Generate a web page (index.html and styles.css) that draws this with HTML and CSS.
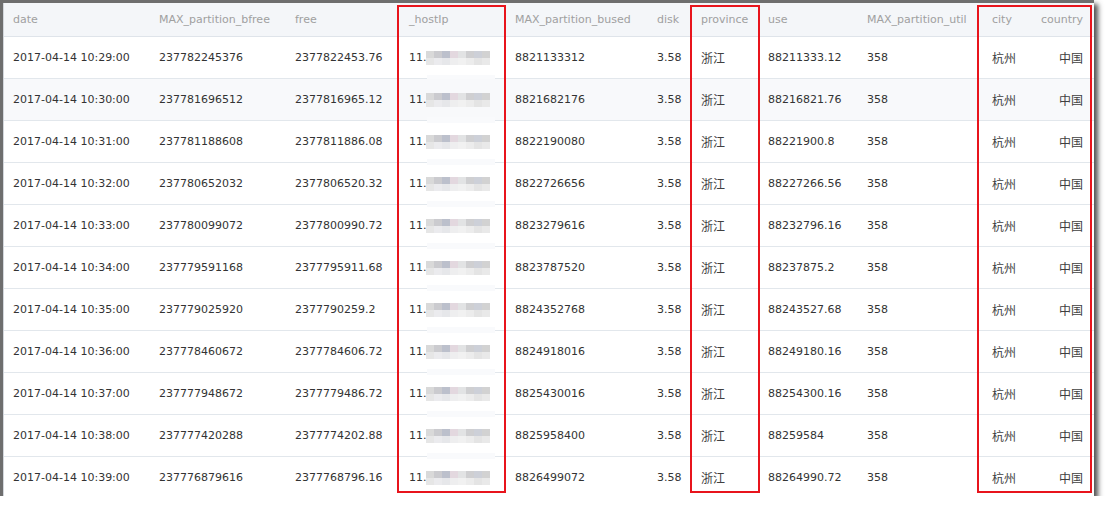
FILE: index.html
```html
<!DOCTYPE html>
<html lang="zh">
<head>
<meta charset="utf-8">
<title>table</title>
<link rel="stylesheet" href="styles.css">
</head>
<body>
<div class="frame">
  <div class="inner">
    <table class="grid">
      <colgroup>
        <col class="w1"><col class="w2"><col class="w3"><col class="w4"><col class="w5"><col class="w6"><col class="w7"><col class="w8"><col class="w9"><col class="w10"><col class="w11">
      </colgroup>
      <thead>
        <tr>
          <th class="first">date</th><th>MAX_partition_bfree</th><th>free</th><th>_hostIp</th><th>MAX_partition_bused</th><th>disk</th><th>province</th><th>use</th><th>MAX_partition_util</th><th>city</th><th class="right">country</th>
        </tr>
      </thead>
      <tbody>
        <tr><td class="first">2017-04-14 10:29:00</td><td>237782245376</td><td>2377822453.76</td><td><span class="ip">11.</span><span class="blur"></span><span class="patch"></span></td><td>8821133312</td><td>3.58</td><td><span class="cjk">浙江</span></td><td>88211333.12</td><td>358</td><td><span class="cjk">杭州</span></td><td class="right"><span class="cjk">中国</span></td></tr>
        <tr class="alt"><td class="first">2017-04-14 10:30:00</td><td>237781696512</td><td>2377816965.12</td><td><span class="ip">11.</span><span class="blur"></span><span class="patch"></span></td><td>8821682176</td><td>3.58</td><td><span class="cjk">浙江</span></td><td>88216821.76</td><td>358</td><td><span class="cjk">杭州</span></td><td class="right"><span class="cjk">中国</span></td></tr>
        <tr><td class="first">2017-04-14 10:31:00</td><td>237781188608</td><td>2377811886.08</td><td><span class="ip">11.</span><span class="blur"></span><span class="patch"></span></td><td>8822190080</td><td>3.58</td><td><span class="cjk">浙江</span></td><td>88221900.8</td><td>358</td><td><span class="cjk">杭州</span></td><td class="right"><span class="cjk">中国</span></td></tr>
        <tr><td class="first">2017-04-14 10:32:00</td><td>237780652032</td><td>2377806520.32</td><td><span class="ip">11.</span><span class="blur"></span><span class="patch"></span></td><td>8822726656</td><td>3.58</td><td><span class="cjk">浙江</span></td><td>88227266.56</td><td>358</td><td><span class="cjk">杭州</span></td><td class="right"><span class="cjk">中国</span></td></tr>
        <tr><td class="first">2017-04-14 10:33:00</td><td>237780099072</td><td>2377800990.72</td><td><span class="ip">11.</span><span class="blur"></span><span class="patch"></span></td><td>8823279616</td><td>3.58</td><td><span class="cjk">浙江</span></td><td>88232796.16</td><td>358</td><td><span class="cjk">杭州</span></td><td class="right"><span class="cjk">中国</span></td></tr>
        <tr><td class="first">2017-04-14 10:34:00</td><td>237779591168</td><td>2377795911.68</td><td><span class="ip">11.</span><span class="blur"></span><span class="patch"></span></td><td>8823787520</td><td>3.58</td><td><span class="cjk">浙江</span></td><td>88237875.2</td><td>358</td><td><span class="cjk">杭州</span></td><td class="right"><span class="cjk">中国</span></td></tr>
        <tr><td class="first">2017-04-14 10:35:00</td><td>237779025920</td><td>2377790259.2</td><td><span class="ip">11.</span><span class="blur"></span><span class="patch"></span></td><td>8824352768</td><td>3.58</td><td><span class="cjk">浙江</span></td><td>88243527.68</td><td>358</td><td><span class="cjk">杭州</span></td><td class="right"><span class="cjk">中国</span></td></tr>
        <tr><td class="first">2017-04-14 10:36:00</td><td>237778460672</td><td>2377784606.72</td><td><span class="ip">11.</span><span class="blur"></span><span class="patch"></span></td><td>8824918016</td><td>3.58</td><td><span class="cjk">浙江</span></td><td>88249180.16</td><td>358</td><td><span class="cjk">杭州</span></td><td class="right"><span class="cjk">中国</span></td></tr>
        <tr><td class="first">2017-04-14 10:37:00</td><td>237777948672</td><td>2377779486.72</td><td><span class="ip">11.</span><span class="blur"></span><span class="patch"></span></td><td>8825430016</td><td>3.58</td><td><span class="cjk">浙江</span></td><td>88254300.16</td><td>358</td><td><span class="cjk">杭州</span></td><td class="right"><span class="cjk">中国</span></td></tr>
        <tr><td class="first">2017-04-14 10:38:00</td><td>237777420288</td><td>2377774202.88</td><td><span class="ip">11.</span><span class="blur"></span><span class="patch"></span></td><td>8825958400</td><td>3.58</td><td><span class="cjk">浙江</span></td><td>88259584</td><td>358</td><td><span class="cjk">杭州</span></td><td class="right"><span class="cjk">中国</span></td></tr>
        <tr><td class="first">2017-04-14 10:39:00</td><td>237776879616</td><td>2377768796.16</td><td><span class="ip">11.</span><span class="blur"></span></td><td>8826499072</td><td>3.58</td><td><span class="cjk">浙江</span></td><td>88264990.72</td><td>358</td><td><span class="cjk">杭州</span></td><td class="right"><span class="cjk">中国</span></td></tr>
      </tbody>
    </table>
  </div>
  <div class="mark mark-ip"></div>
  <div class="mark mark-prov"></div>
  <div class="mark mark-city"></div>
</div>
</body>
</html>
```

FILE: styles.css
```css
html, body {
  margin: 0;
  padding: 0;
  background: #ffffff;
}

body {
  font-family: "DejaVu Sans", "Noto Sans CJK SC", sans-serif;
  font-size: 11px;
  color: #333333;
}

.frame {
  position: relative;
  width: 1091px;
  height: 493px;
  border-top: 3px solid #6e6e6e;
  border-left: 3px solid #6e6e6e;
  box-shadow: 4px 4px 5px rgba(50, 50, 50, 0.85);
  background: #ffffff;
}

.inner {
  height: 493px;
  overflow: hidden;
  border-left: 1px solid #d3d7dc;
}

.grid {
  width: 1090px;
  table-layout: fixed;
  border-collapse: collapse;
  border-spacing: 0;
}

.w1 { width: 145px; }
.w2 { width: 136px; }
.w3 { width: 114px; }
.w4 { width: 106px; }
.w5 { width: 142px; }
.w6 { width: 44px; }
.w7 { width: 67px; }
.w8 { width: 99px; }
.w9 { width: 125px; }
.w10 { width: 58px; }
.w11 { width: 54px; }

.grid th {
  height: 33px;
  padding: 0 10px;
  text-align: left;
  font-weight: normal;
  color: #a0a0a0;
  background: #f4f6f9;
  border-bottom: 1px solid #dfe4ea;
  white-space: nowrap;
  vertical-align: middle;
}

.grid td {
  position: relative;
  height: 41px;
  padding: 0 10px;
  text-align: left;
  border-bottom: 1px solid #e2e7ec;
  white-space: nowrap;
  vertical-align: middle;
}

.grid .first {
  padding-left: 9px;
}

.grid .right {
  text-align: right;
  padding-left: 0;
  padding-right: 11px;
}

.grid tr.alt td {
  background: #f8f9fb;
}

.cjk {
  font-family: "Noto Sans CJK SC", "DejaVu Sans", sans-serif;
  font-size: 12px;
  font-weight: 400;
  color: #404040;
}

.ip {
  display: inline-block;
  vertical-align: middle;
}

.blur {
  display: inline-block;
  vertical-align: middle;
  width: 64px;
  height: 14px;
  margin-left: -1px;
  background:
    linear-gradient(90deg, #d9d9d9 0 8px, #cbcbcf 8px 16px, #bcc0cc 16px 24px, #e3d8df 24px 32px, #e2e3e4 32px 40px, #cfcfd1 40px 48px, #cdd0d8 48px 56px, #d2d2d2 56px 64px) top left / 64px 7px no-repeat,
    linear-gradient(90deg, #e6e6e6 0 8px, #ebebee 8px 16px, #e6e7ea 16px 24px, #eeeeef 24px 32px, #f1f1f1 32px 40px, #ececec 40px 48px, #e4e4e4 48px 56px, #e9e9e9 56px 64px) bottom left / 64px 7px no-repeat;
}

.patch {
  position: absolute;
  left: 28px;
  bottom: -3px;
  width: 68px;
  height: 6px;
  background: #f9fafc;
}

.mark {
  position: absolute;
  top: 2px;
  height: 488px;
  box-sizing: border-box;
  border: 2px solid #e8141c;
}

.mark-ip {
  left: 394px;
  width: 109px;
}

.mark-prov {
  left: 687px;
  width: 70px;
}

.mark-city {
  left: 974px;
  width: 115px;
}
```
